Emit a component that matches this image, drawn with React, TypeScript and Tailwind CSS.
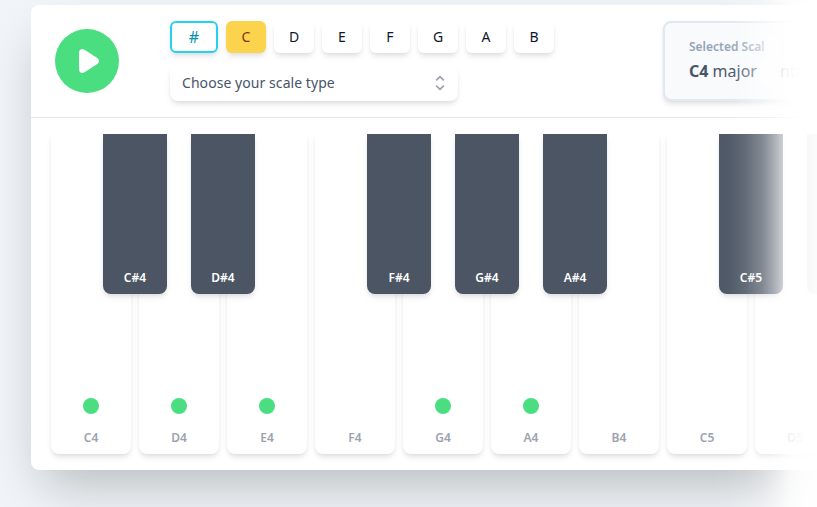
import React from "react";

type PianoKey = { name: string; label?: string; sharp?: boolean; marked?: boolean };

const notes = ["C", "D", "E", "F", "G", "A", "B"];

const keys: PianoKey[] = [
  { name: "C4", marked: true },
  { name: "C#4", sharp: true },
  { name: "D4", marked: true },
  { name: "D#4", sharp: true },
  { name: "E4", marked: true },
  { name: "F4" },
  { name: "F#4", sharp: true },
  { name: "G4", marked: true },
  { name: "G#4", sharp: true },
  { name: "A4", marked: true },
  { name: "A#4", sharp: true },
  { name: "B4" },
  { name: "C5" },
  { name: "C#5", sharp: true },
  { name: "D5" },
  { name: "D#5", label: "", sharp: true },
];

const softShadow =
  "shadow-[0_4px_6px_-1px_rgba(0,0,0,0.1),0_2px_4px_-1px_rgba(0,0,0,0.06)]";

function PlayButton() {
  return (
    <button className="mt-6 flex size-16 shrink-0 items-center justify-center rounded-full bg-[#4ade80]">
      <svg viewBox="0 0 64 64" className="size-16" fill="white">
        <path d="M24 24v16c0 3.4 2.8 5 5.5 3.3l12.4-8c2.8-1.8 2.8-4.8 0-6.6l-12.4-8c-2.7-1.7-5.5-.1-5.5 3.3z" />
      </svg>
    </button>
  );
}

function NotePicker() {
  return (
    <div className="flex gap-2">
      <button className={`h-8 w-12 rounded-md border-2 border-[#22d3ee] bg-white text-base text-[#0891b2] ${softShadow}`}>
        #
      </button>
      {notes.map((note) => (
        <button
          key={note}
          className={`h-8 w-10 rounded-md text-sm ${softShadow} ${
            note === "C" ? "bg-[#fcd34d] text-[#78350f]" : "bg-white text-[#0f172a]"
          }`}
        >
          {note}
        </button>
      ))}
    </div>
  );
}

function ScaleSelect() {
  return (
    <button
      className={`mt-3 flex h-9 w-72 items-center justify-between rounded-lg bg-white pr-2 pl-3 text-sm text-[#475569] ${softShadow}`}
    >
      <span className="tracking-[0.06px]">Choose your scale type</span>
      <svg
        viewBox="0 0 20 20"
        className="size-5"
        fill="none"
        stroke="#9ca3af"
        strokeWidth="1.8"
        strokeLinecap="butt"
        strokeLinejoin="round"
      >
        <path d="M6.2 7.4L10 3.7l3.8 3.7m0 5.2L10 16.3l-3.8-3.7" />
      </svg>
    </button>
  );
}

function SelectedScale() {
  return (
    <div
      className={`relative mt-4 ml-[109px] h-20 w-64 shrink-0 rounded-lg border-2 border-[#e2e8f0] bg-[#f8fafc] px-6 pt-4 ${softShadow}`}
    >
      <div className="text-xs leading-4 font-semibold text-[#94a3b8]">Selected Scale</div>
      <div className="mt-1 leading-6 text-[#475569]">
        <b className="font-bold">C4</b> major penta
      </div>
      {/* soft highlights over the ends of both lines */}
      <span className="absolute top-3.5 left-[99px] h-5 w-4 rounded-full bg-[#fdfeff] blur-[1px]" />
      <span className="absolute top-9 left-[94px] h-7 w-[21px] rounded-lg bg-[#fdfeff] blur-[1px]" />
      <span className="absolute -top-1 -bottom-3 left-[70px] w-48 bg-linear-to-r from-white/0 via-white/60 via-25% to-white to-40%" />
    </div>
  );
}

function Key({ name, label = name, sharp, marked }: PianoKey) {
  if (sharp) {
    return (
      <div
        className={`z-10 -mr-7 -ml-9 flex h-40 w-16 shrink-0 items-end justify-center rounded-b-lg bg-[#4b5563] pb-2 text-xs leading-4 font-semibold text-white ${softShadow}`}
      >
        {label}
      </div>
    );
  }
  return (
    <div
      className={`mr-2 flex h-80 w-20 shrink-0 flex-col items-center justify-end rounded-b-lg bg-white pb-2 text-xs leading-4 font-semibold text-[#9ca3af] ${softShadow}`}
    >
      {marked && <span className="mb-4 size-4 rounded-full bg-[#4ade80]" />}
      {label}
    </div>
  );
}

export default function App() {
  return (
    <div className="relative h-[507px] w-[817px] overflow-hidden bg-[#f1f5f9] pt-[5px] pl-[31px] font-['Noto_Sans',sans-serif]">
      <main className="h-[465px] w-[1100px] overflow-hidden rounded-lg bg-white shadow-[0_25px_50px_-12px_rgba(0,0,0,0.25)]">
        <header className="flex h-[113px] border-b border-[#e2e8f0] pl-6">
          <PlayButton />
          <div className="mt-4 ml-[51px] w-96 shrink-0">
            <NotePicker />
            <ScaleSelect />
          </div>
          <SelectedScale />
        </header>
        <section className="mt-4 flex h-[336px] items-start overflow-hidden pl-5">
          {keys.map((key) => (
            <Key key={key.name} {...key} />
          ))}
        </section>
      </main>
      <div className="pointer-events-none absolute inset-y-0 right-0 z-20 w-[117px] bg-[linear-gradient(to_right,rgba(255,255,255,0)_10px,rgba(255,255,255,0.04)_30px,rgba(255,255,255,0.13)_45px,rgba(255,255,255,0.3)_62px,rgba(255,255,255,0.5)_73px,rgba(255,255,255,0.72)_83px,rgba(255,255,255,0.86)_90px,rgba(255,255,255,0.95)_102px,rgba(255,255,255,0.98)_117px)]" />
    </div>
  );
}
